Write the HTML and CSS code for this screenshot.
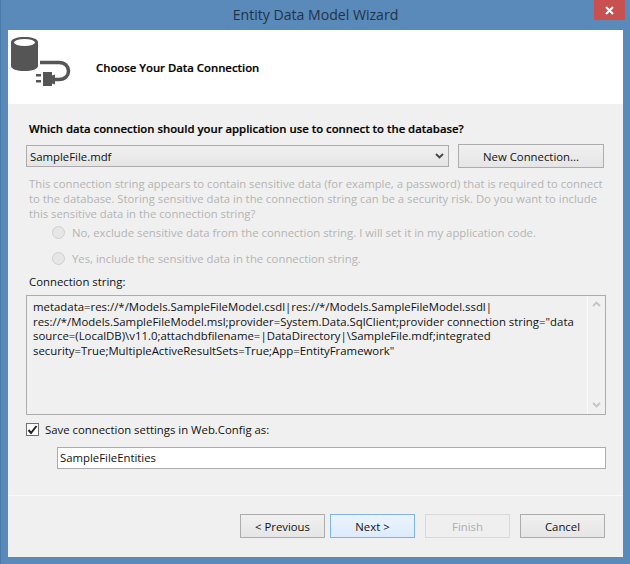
FILE: index.html
```html
<!DOCTYPE html>
<html lang="en">
<head>
<meta charset="utf-8">
<title>Entity Data Model Wizard</title>
<link rel="stylesheet" href="styles.css">
</head>
<body>
<div class="window">
  <div class="titlebar">
    <span class="title">Entity Data Model Wizard</span>
    <div class="close"><svg width="9" height="9" viewBox="0 0 9 9"><path d="M1 1l7 7M8 1l-7 7" stroke="#fff" stroke-width="2" fill="none"/></svg></div>
  </div>
  <div class="client">
    <header class="banner">
      <svg class="logo" width="62" height="56" viewBox="0 0 62 56">
        <path d="M2 9c0-3 6-5 13.500-5S29 6 29 9v24c0 3-6 5-13.500 5S2 36 2 33z" fill="#555"/>
        <ellipse cx="15.500" cy="9.500" rx="10.500" ry="3.500" fill="#fff"/>
        <path d="M31 29.500h19c6 0 9.500 4 9.500 8.500s-3.500 8.500-9.500 8.500h-4" fill="none" stroke="#555" stroke-width="3.500"/>
        <path d="M46 41.500v10l-3-1v-8z" fill="#555"/>
        <rect x="34" y="39" width="9" height="14" fill="#555"/>
        <rect x="27" y="41" width="5" height="2.500" fill="#555"/>
        <rect x="27" y="47" width="5" height="2.500" fill="#555"/>
      </svg>
      <h1 class="banner-title">Choose Your Data Connection</h1>
    </header>
    <main class="body">
      <p class="question">Which data connection should your application use to connect to the database?</p>
      <div class="conn-row">
        <div class="combo"><span>SampleFile.mdf</span>
          <svg width="9" height="6" viewBox="0 0 9 6"><path d="M1 1l3.500 3.500L8 1" fill="none" stroke="#444" stroke-width="1.800"/></svg>
        </div>
        <button class="btn new-conn">New Connection...</button>
      </div>
      <p class="warning">This connection string appears to contain sensitive data (for example, a password) that is required to connect<br>to the database. Storing sensitive data in the connection string can be a security risk. Do you want to include<br>this sensitive data in the connection string?</p>
      <div class="radio first"><i class="dot"></i><span>No, exclude sensitive data from the connection string. I will set it in my application code.</span></div>
      <div class="radio"><i class="dot"></i><span>Yes, include the sensitive data in the connection string.</span></div>
      <div class="label">Connection string:</div>
      <div class="textbox">
        <div class="text">metadata=res://*/Models.SampleFileModel.csdl|res://*/Models.SampleFileModel.ssdl|<br>res://*/Models.SampleFileModel.msl;provider=System.Data.SqlClient;provider connection string="data<br>source=(LocalDB)\v11.0;attachdbfilename=|DataDirectory|\SampleFile.mdf;integrated<br>security=True;MultipleActiveResultSets=True;App=EntityFramework"</div>
        <div class="scrollbar">
          <svg width="9" height="6" viewBox="0 0 9 6"><path d="M1 5l3.500-3.500L8 5" fill="none" stroke="#c4c4c4" stroke-width="1.800"/></svg>
          <svg width="9" height="6" viewBox="0 0 9 6"><path d="M1 1l3.500 3.500L8 1" fill="none" stroke="#c4c4c4" stroke-width="1.800"/></svg>
        </div>
      </div>
      <div class="check-row">
        <div class="check"><svg width="11" height="10" viewBox="0 0 11 10"><path d="M1.500 5l2.500 3L9.500 1" fill="none" stroke="#222" stroke-width="2"/></svg></div>
        <span>Save connection settings in Web.Config as:</span>
      </div>
      <div class="entity">SampleFileEntities</div>
    </main>
    <footer class="footer">
      <button class="btn">&lt; Previous</button>
      <button class="btn next">Next &gt;</button>
      <button class="btn disabled">Finish</button>
      <button class="btn">Cancel</button>
    </footer>
  </div>
</div>
</body>
</html>
```
FILE: styles.css
```css
* { box-sizing: border-box; }
html, body { margin: 0; padding: 0; }
body {
  width: 630px;
  height: 564px;
  overflow: hidden;
  font-family: "Open Sans", "Noto Sans", sans-serif;
  font-size: 11.35px;
  color: #111;
}
.window {
  width: 630px;
  height: 564px;
  background: #5a8aba;
  border-left: 1px solid #477aa8;
  padding: 0 7px 7px 7px;
  display: flex;
  flex-direction: column;
}
.titlebar {
  height: 30px;
  flex: none;
  position: relative;
  display: flex;
  justify-content: center;
  padding-top: 4px;
}
.title { font-size: 14.1px; line-height: 22px; color: #1f3347; }
.close {
  position: absolute;
  top: 0;
  right: -2px;
  width: 31px;
  height: 20px;
  background: #c75050;
  display: flex;
  align-items: center;
  justify-content: center;
}
.client {
  flex: 1;
  background: #f0f0f0;
  display: flex;
  flex-direction: column;
  width: 615px;
}
.banner {
  height: 74px;
  flex: none;
  background: #fff;
  display: flex;
  align-items: flex-start;
}
.logo { flex: none; margin: 3px 0 0 1px; }
.banner-title {
  margin: 0 0 0 25px;
  padding-top: 28px;
  font-size: 11.35px;
  line-height: 20px;
  font-weight: 600;
  color: #000;
  -webkit-text-stroke: 0.2px #000;
}
.body {
  flex: 1;
  padding: 16px 16px 0 18px;
  display: flex;
  flex-direction: column;
}
.question {
  margin: 0 0 0 3px;
  line-height: 18px;
  font-weight: 600;
  color: #000;
  -webkit-text-stroke: 0.2px #000;
}
.conn-row { display: flex; gap: 9px; margin-top: 6px; height: 24px; }
.combo {
  width: 423px;
  height: 22px;
  margin-top: 1px;
  border: 1px solid #acacac;
  background: linear-gradient(#f0f0f0, #e5e5e5);
  display: flex;
  align-items: center;
  justify-content: space-between;
  padding: 0 4px 0 3px;
}
.btn {
  width: 85px;
  height: 24px;
  border: 1px solid #acacac;
  background: linear-gradient(#f0f0f0, #e5e5e5);
  font: inherit;
  color: #111;
  padding: 0;
}
.new-conn { width: 146px; }
.warning {
  margin: 8px 0 0 3px;
  width: 580px;
  font-size: 11.3px;
  line-height: 15px;
  color: #b4b4b4;
  height: 45px;
  white-space: nowrap;
}
.radio {
  display: flex;
  align-items: center;
  gap: 7px;
  margin: 11px 0 0 26px;
  height: 15px;
  color: #b4b4b4;
  white-space: nowrap;
}
.radio.first { margin-top: 4px; }
.dot {
  width: 13px;
  height: 13px;
  border-radius: 50%;
  border: 1px solid #cfcfcf;
  background: #e6e6e6;
  flex: none;
}
.label { margin: 8px 0 0 3px; line-height: 15px; height: 15px; }
.textbox {
  margin-top: 6px;
  height: 120px;
  width: 580px;
  border: 1px solid #acacac;
  background: #f0f0f0;
  display: flex;
  justify-content: space-between;
  flex: none;
}
.text { padding: 4px 0 0 6px; line-height: 14.500px; white-space: nowrap; font-size: 11.4px; }
.scrollbar {
  width: 18px;
  border-left: 1px solid #fafafa;
  display: flex;
  flex-direction: column;
  justify-content: space-between;
  align-items: center;
  padding: 5px 0 6px;
  flex: none;
}
.check-row { display: flex; align-items: center; gap: 6px; margin-top: 7px; height: 15px; }
.check {
  width: 13px;
  height: 13px;
  border: 1px solid #707070;
  background: #fff;
  display: flex;
  align-items: center;
  justify-content: center;
  flex: none;
}
.entity {
  margin: 10px 0 0 31px;
  width: 549px;
  height: 22px;
  border: 1px solid #acacac;
  background: #fff;
  line-height: 20px;
  padding-left: 2px;
  flex: none;
}
.footer {
  flex: none;
  height: 62px;
  border-top: 1px solid #fafafa;
  display: flex;
  justify-content: flex-end;
  gap: 5px;
  padding: 18px 18px 0 0;
}
.next {
  border-color: #7eb4ea;
  background: linear-gradient(#ecf4fc, #dcecfc);
}
.disabled {
  margin: 0 5px;
  background: #efefef;
  border-color: #d9d9d9;
  color: #adadad;
}
```
